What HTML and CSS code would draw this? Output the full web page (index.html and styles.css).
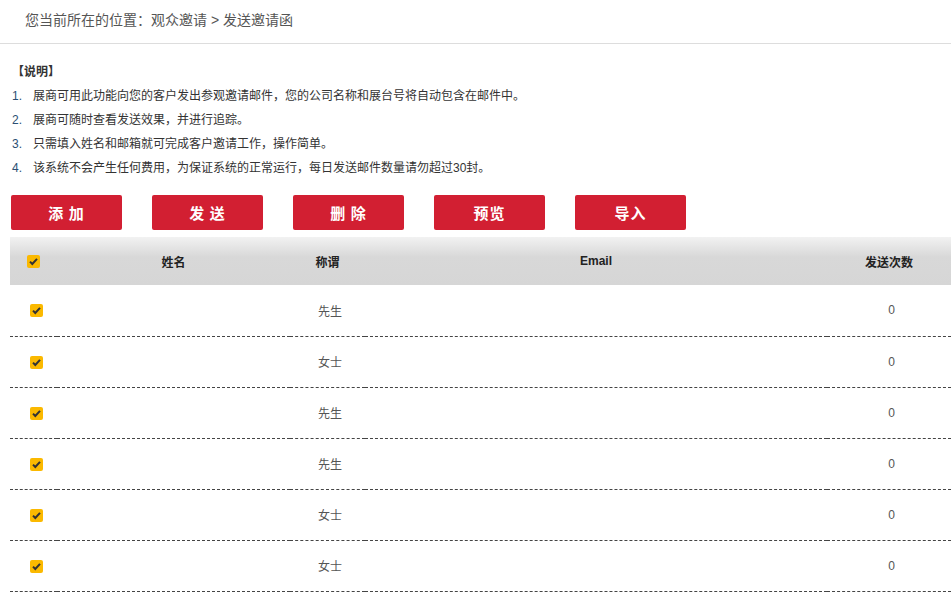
FILE: index.html
```html
<!DOCTYPE html>
<html lang="zh-CN">
<head>
<meta charset="utf-8">
<title>发送邀请函</title>
<link rel="stylesheet" href="styles.css">
</head>
<body>
<div class="crumb">您当前所在的位置：观众邀请 &gt; 发送邀请函</div>
<div class="notes">
  <div class="notes-title">【说明】</div>
  <ol class="notes-list">
    <li><span class="num">1.</span>展商可用此功能向您的客户发出参观邀请邮件，您的公司名称和展台号将自动包含在邮件中。</li>
    <li><span class="num">2.</span>展商可随时查看发送效果，并进行追踪。</li>
    <li><span class="num">3.</span>只需填入姓名和邮箱就可完成客户邀请工作，操作简单。</li>
    <li><span class="num">4.</span>该系统不会产生任何费用，为保证系统的正常运行，每日发送邮件数量请勿超过30封。</li>
  </ol>
</div>
<div class="actions">
  <button class="btn">添 加</button>
  <button class="btn">发 送</button>
  <button class="btn">删 除</button>
  <button class="btn">预览</button>
  <button class="btn">导入</button>
</div>
<table class="grid">
  <colgroup>
    <col class="c1"><col class="c2"><col class="c3"><col class="c4"><col class="c5">
  </colgroup>
  <thead>
    <tr>
      <th><span class="cb"><svg viewBox="0 0 13 13" width="13" height="13"><path d="M3 6.6 L5.3 9 L10 3.8" fill="none" stroke="#333" stroke-width="2"/></svg></span></th>
      <th>姓名</th><th>称谓</th><th>Email</th><th>发送次数</th>
    </tr>
  </thead>
  <tbody>
    <tr><td><span class="cb"><svg viewBox="0 0 13 13" width="13" height="13"><path d="M3 6.6 L5.3 9 L10 3.8" fill="none" stroke="#333" stroke-width="2"/></svg></span></td><td></td><td>先生</td><td></td><td>0</td></tr>
    <tr><td><span class="cb"><svg viewBox="0 0 13 13" width="13" height="13"><path d="M3 6.6 L5.3 9 L10 3.8" fill="none" stroke="#333" stroke-width="2"/></svg></span></td><td></td><td>女士</td><td></td><td>0</td></tr>
    <tr><td><span class="cb"><svg viewBox="0 0 13 13" width="13" height="13"><path d="M3 6.6 L5.3 9 L10 3.8" fill="none" stroke="#333" stroke-width="2"/></svg></span></td><td></td><td>先生</td><td></td><td>0</td></tr>
    <tr><td><span class="cb"><svg viewBox="0 0 13 13" width="13" height="13"><path d="M3 6.6 L5.3 9 L10 3.8" fill="none" stroke="#333" stroke-width="2"/></svg></span></td><td></td><td>先生</td><td></td><td>0</td></tr>
    <tr><td><span class="cb"><svg viewBox="0 0 13 13" width="13" height="13"><path d="M3 6.6 L5.3 9 L10 3.8" fill="none" stroke="#333" stroke-width="2"/></svg></span></td><td></td><td>女士</td><td></td><td>0</td></tr>
    <tr><td><span class="cb"><svg viewBox="0 0 13 13" width="13" height="13"><path d="M3 6.6 L5.3 9 L10 3.8" fill="none" stroke="#333" stroke-width="2"/></svg></span></td><td></td><td>女士</td><td></td><td>0</td></tr>
  </tbody>
</table>
</body>
</html>
```

FILE: styles.css
```css
* { box-sizing: border-box; }
html, body { margin: 0; padding: 0; background: #fff; }
body {
  font-family: "Liberation Sans", "Noto Sans CJK SC", sans-serif;
  font-size: 12px;
  color: #333;
  overflow: hidden;
}
.crumb {
  height: 44px;
  line-height: 41px;
  padding-left: 25px;
  font-size: 14px;
  color: #555;
  border-bottom: 1px solid #ddd;
}
.notes {
  padding: 17px 0 0 12px;
}
.notes-title {
  font-weight: bold;
  line-height: 23px;
  color: #333;
}
.notes-list {
  list-style: none;
  margin: 0;
  padding: 0;
}
.notes-list li {
  line-height: 24px;
  color: #333;
}
.num {
  display: inline-block;
  width: 21px;
  color: #2b4f73;
}
.actions {
  display: flex;
  gap: 30px;
  padding: 15px 0 0 11px;
}
.btn {
  width: 111px;
  height: 35px;
  border: none;
  border-radius: 2px;
  background: #d21f32;
  color: #fff;
  font-family: "Noto Sans CJK SC", sans-serif;
  font-size: 15px;
  font-weight: bold;
  letter-spacing: 1px;
  padding: 0;
}
.grid {
  margin: 7px 0 0 10px;
  width: 941px;
  border-collapse: collapse;
  table-layout: fixed;
}
.c1 { width: 47px; }
.c2 { width: 233px; }
.c3 { width: 75px; }
.c4 { width: 462px; }
.c5 { width: 124px; }
.grid th {
  height: 48px;
  padding: 0;
  font-weight: bold;
  font-size: 12px;
  color: #222;
  text-align: center;
  background: linear-gradient(#f2f2f2 0px, #d8d8d8 20px, #d6d6d6 100%);
}
.grid td {
  height: 51px;
  padding: 0 0 0 5px;
  text-align: center;
  color: #555;
  border-bottom: 1px dashed #444;
}
.cb {
  display: inline-block;
  width: 13px;
  height: 13px;
  border-radius: 2px;
  background: #fbb900;
  vertical-align: middle;
}
.cb svg { display: block; }
```
